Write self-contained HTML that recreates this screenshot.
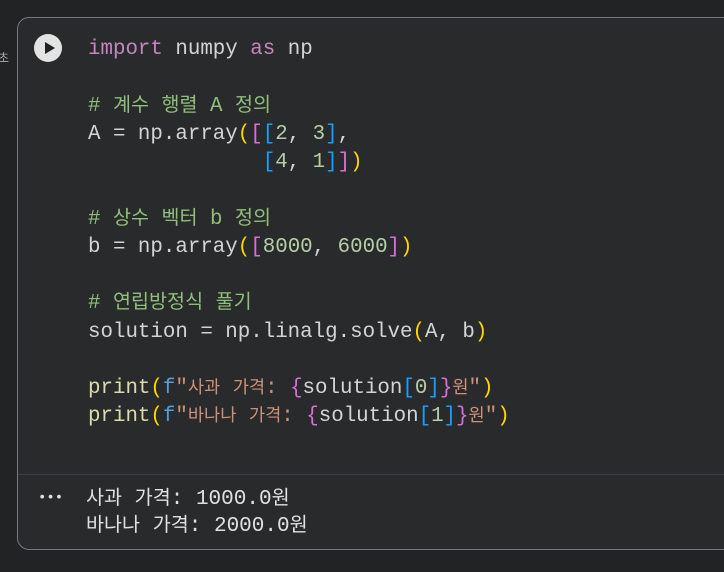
<!DOCTYPE html>
<html><head><meta charset="utf-8"><style>
body{margin:0;width:724px;height:572px;background:#222325;overflow:hidden;position:relative;font-family:"Liberation Mono","Noto Sans CJK KR",monospace;}
.cell{position:absolute;left:17px;top:17px;width:740px;height:531px;border:1px solid #75787c;border-radius:12px;background:#282a2c;}
.div{position:absolute;left:18px;top:474px;width:720px;height:1px;background:#3c3f43;}
.code{position:absolute;left:88px;top:36px;font-size:20.8px;color:#d4d4d4;}
.code div,.out div{height:28.25px;line-height:28.25px;white-space:pre;}
.out div{height:27px;line-height:27px;}
.out{position:absolute;left:86px;top:486px;font-size:21px;color:#e0e0e0;}
.k{font-family:"Noto Sans CJK KR",sans-serif;font-size:19.6px;line-height:0;}
.s .k{font-size:17.6px;}
.kw{color:#c586c0}.cm{color:#8fbf7a}.n{color:#b5cea8}.y{color:#ffd700}.p{color:#da70d6}.b{color:#179fff}
.fn{color:#dcdcaa}.f{color:#569cd6}.s{color:#ce9178}
.play{position:absolute;left:34px;top:34px;width:28px;height:28px;border-radius:50%;background:#e3e3e3;}
.play:after{content:"";position:absolute;left:11px;top:8px;border-left:10px solid #222;border-top:6px solid transparent;border-bottom:6px solid transparent;}
.side{position:absolute;left:-2px;top:49px;font-family:"Noto Sans CJK KR",sans-serif;font-size:12px;color:#aaa;}
.dots{position:absolute;left:38px;top:490px;font-size:14px;color:#e0e0e0;}
</style></head><body>
<div class="side">초</div>
<div class="cell"></div>
<div class="div"></div>
<div class="play"></div>
<div class="code"><div><span class="kw">import</span> numpy <span class="kw">as</span> np</div>
<div></div>
<div><span class="cm"># <span class="k">계수</span> <span class="k">행렬</span> A <span class="k">정의</span></span></div>
<div>A = np.array<span class="y">(</span><span class="p">[</span><span class="b">[</span><span class="n">2</span>, <span class="n">3</span><span class="b">]</span>,</div>
<div>              <span class="b">[</span><span class="n">4</span>, <span class="n">1</span><span class="b">]</span><span class="p">]</span><span class="y">)</span></div>
<div></div>
<div><span class="cm"># <span class="k">상수</span> <span class="k">벡터</span> b <span class="k">정의</span></span></div>
<div>b = np.array<span class="y">(</span><span class="p">[</span><span class="n">8000</span>, <span class="n">6000</span><span class="p">]</span><span class="y">)</span></div>
<div></div>
<div><span class="cm"># <span class="k">연립방정식</span> <span class="k">풀기</span></span></div>
<div>solution = np.linalg.solve<span class="y">(</span>A, b<span class="y">)</span></div>
<div></div>
<div><span class="fn">print</span><span class="y">(</span><span class="f">f</span><span class="s">"<span class="k">사과</span> <span class="k">가격</span>: </span><span class="p">{</span>solution<span class="b">[</span><span class="n">0</span><span class="b">]</span><span class="p">}</span><span class="s"><span class="k">원</span>"</span><span class="y">)</span></div>
<div><span class="fn">print</span><span class="y">(</span><span class="f">f</span><span class="s">"<span class="k">바나나</span> <span class="k">가격</span>: </span><span class="p">{</span>solution<span class="b">[</span><span class="n">1</span><span class="b">]</span><span class="p">}</span><span class="s"><span class="k">원</span>"</span><span class="y">)</span></div></div>
<div class="dots">•••</div>
<div class="out"><div><span class="k">사과</span> <span class="k">가격</span>: 1000.0<span class="k">원</span></div>
<div><span class="k">바나나</span> <span class="k">가격</span>: 2000.0<span class="k">원</span></div></div>
</body></html>
